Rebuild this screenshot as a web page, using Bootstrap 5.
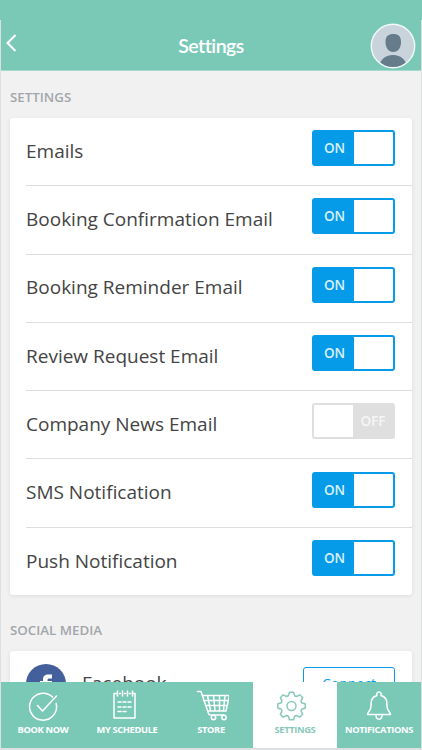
<!DOCTYPE html>
<html lang="en">
<head>
<meta charset="utf-8">
<meta name="viewport" content="width=device-width, initial-scale=1">
<title>Settings</title>
<link href="https://cdn.jsdelivr.net/npm/bootstrap@5.3.0/dist/css/bootstrap.min.css" rel="stylesheet">
<style>
:root{--teal:#7ac9b7;--blue:#069be9}
body{font-family:"Open Sans","Noto Sans",sans-serif;background:#f1f1f1;color:#444}
.app{height:750px;overflow:hidden}
.frame{border:solid #dedfe0;border-width:0 1px 2px;min-height:0}
.strip{height:20px;background:var(--teal)}
.topbar{height:51px;background:var(--teal);border-bottom:1px solid #a9d8cd;padding:0 5px 0 5px}
.side{width:46px}
.topbar h1{font:600 19.5px/1 Lato,sans-serif;letter-spacing:-.5px;padding-top:1px}
.avatar{width:46px;height:46px;margin-top:1px}
.content{min-height:0;padding:0 9px}
.heading{font-size:13.3px;font-weight:600;line-height:16px;color:#a2a6aa;padding-top:18px;height:47px}
.social-heading{height:56px;padding-top:27px}
.panel{background:#fff;border-radius:3px;box-shadow:0 1px 4px rgba(0,0,0,.09)}
.settings{height:477px;padding-left:16px}
.setting{height:68.3px;border-bottom:1px solid #dedede;padding-right:17px}
.setting:last-child{border:0}
.setting .name{font-size:19px;line-height:24px;padding-bottom:2px}
.switch{width:83px;height:36px;border:2px solid var(--blue);border-radius:3px;background:#fff;margin-top:-7px;color:#d9f1fd;font-size:13.5px;font-weight:600;line-height:32px;text-align:center}
.switch span{width:40px;background:var(--blue);padding-left:1px}
.switch.off{border-color:#dfdfdf;color:#f6f6f6}
.switch.off span{background:#dfdfdf;padding:0}
.social{height:80px;padding:13px 17px 0 16px}
.fb{width:40px;height:40px}
.social .name{font-size:19px;line-height:24px;margin:7px 0 0 16px}
.connect{width:92px;height:36px;border:1px solid var(--blue);border-radius:3px;color:var(--blue);font-size:14px;line-height:32px;margin-top:3px}
.tabs{height:66px;background:var(--teal);z-index:1}
.tab{width:84px;color:#fff;font-size:9.3px;font-weight:700;letter-spacing:-.35px;line-height:12px;padding-top:7px;text-decoration:none;white-space:nowrap}
.tab svg{width:36px;height:34px;margin-bottom:1px;fill:none;stroke:currentColor;stroke-width:1.5;stroke-linecap:round;stroke-linejoin:round}
.tab.current{background:#fff;color:#89c8b9}
</style>
</head>
<body>
<div class="app d-flex flex-column">
  <div class="strip flex-shrink-0"></div>
  <div class="frame d-flex flex-column flex-grow-1">
    <header class="topbar d-flex align-items-center justify-content-between flex-shrink-0 text-white">
      <a href="#" class="side d-flex text-white" aria-label="Back"><svg width="12" height="20" viewBox="0 0 12 20" class="mb-1" fill="none" stroke="currentColor" stroke-width="2"><path d="M9.500 2 1.500 10l8 8"/></svg></a>
      <h1 class="m-0">Settings</h1>
      <svg class="avatar" viewBox="0 0 46 46"><defs><clipPath id="face"><circle cx="23" cy="23" r="21"/></clipPath></defs><circle cx="23" cy="23" r="21.700" fill="#c8d3dc" stroke="#f2faf9" stroke-width="1.400"/><g clip-path="url(#face)" fill="#667c8b"><path d="M15.500 19c0-6 3-8 7.800-8s7.700 2 7.700 8c0 6-3 10-7.700 10s-7.800-4-7.800-10z"/><path d="M9 46c0-8 5-14 14-14s14 6 14 14z"/></g></svg>
    </header>
    <main class="content flex-grow-1 overflow-hidden">
      <h2 class="heading m-0">SETTINGS</h2>
      <section class="panel settings">
        <div class="setting d-flex align-items-center justify-content-between"><span class="name">Emails</span><div class="switch d-flex"><span>ON</span></div></div>
        <div class="setting d-flex align-items-center justify-content-between"><span class="name">Booking Confirmation Email</span><div class="switch d-flex"><span>ON</span></div></div>
        <div class="setting d-flex align-items-center justify-content-between"><span class="name">Booking Reminder Email</span><div class="switch d-flex"><span>ON</span></div></div>
        <div class="setting d-flex align-items-center justify-content-between"><span class="name">Review Request Email</span><div class="switch d-flex"><span>ON</span></div></div>
        <div class="setting d-flex align-items-center justify-content-between"><span class="name">Company News Email</span><div class="switch off d-flex justify-content-end"><span>OFF</span></div></div>
        <div class="setting d-flex align-items-center justify-content-between"><span class="name">SMS Notification</span><div class="switch d-flex"><span>ON</span></div></div>
        <div class="setting d-flex align-items-center justify-content-between"><span class="name">Push Notification</span><div class="switch d-flex"><span>ON</span></div></div>
      </section>
      <h2 class="heading social-heading m-0">SOCIAL MEDIA</h2>
      <section class="panel social d-flex align-items-start">
        <svg class="fb" viewBox="0 0 40 40"><circle cx="20" cy="20" r="20" fill="#43609c"/><path fill="#fff" d="M17 32V21h-3v-4h3v-2c0-3 2-4.500 5-4.500h4v4h-2.500c-1.500 0-2 .5-2 2V17h4.500l-.6 4h-3.900v11z"/></svg>
        <span class="name">Facebook</span>
        <span class="connect text-center ms-auto">Connect</span>
      </section>
    </main>
    <nav class="tabs d-flex flex-shrink-0 position-relative">
      <a href="#" class="tab d-flex flex-column align-items-center"><svg viewBox="-18 -17 36 34"><path d="M9.500-9A13.500 13.500 0 1 0 13.200-2.500M-5.500-.5l5 5.500L13.500-10"/></svg>BOOK NOW</a>
      <a href="#" class="tab d-flex flex-column align-items-center"><svg viewBox="-15.500 -16 36 34"><path d="M-8-11.500h-2.500V13h21v-24.500H8.500M-5-11.500h1M0-11.500h1M5-11.500h1M-7-14v5M-2-14v5M3-14v5M8-14v5M-6.500-3h3M-1.500-3h3M3.500-3h3M-6.500 2h3M-1.500 2h3M3.500 2h3M-6.500 6.500h3M-1.500 6.500h3"/></svg>MY SCHEDULE</a>
      <a href="#" class="tab d-flex flex-column align-items-center"><svg viewBox="-18.500 -17 36 34"><path d="M-14-14.500h3.500l7.500 22q.5 1.500 2 1.500h13.500M-9.500-10.500h27.500L14.500 5H-3.500M-8-5.500h25M-6-.5h21.500M-4-10.500l3 15M2-10.500l1.500 15M8-10.500L8 4.500M13.500-10.500l-1.500 15"/><circle cx="2" cy="11.500" r="2.200"/><circle cx="12.500" cy="11.500" r="2.200"/></svg>STORE</a>
      <a href="#" class="tab current d-flex flex-column align-items-center"><svg viewBox="-14.500 -17 36 34"><path d="M-3.200-10.200-2-13.800H2L3.200-10.200 4.950-9.470 8.340-11.170 11.170-8.340 9.470-4.950 10.200-3.200 13.800-2V2L10.200 3.200 9.470 4.950 11.170 8.340 8.340 11.170 4.950 9.470 3.200 10.200 2 13.800H-2L-3.200 10.200-4.950 9.470-8.340 11.170-11.170 8.340-9.470 4.950-10.200 3.200-13.800 2V-2L-10.200-3.200-9.470-4.950-11.170-8.340-8.340-11.170-4.950-9.470z"/><circle r="4.500"/></svg>SETTINGS</a>
      <a href="#" class="tab d-flex flex-column align-items-center"><svg viewBox="-18 -17 36 34"><path d="M-2-10.500a2.300 2.300 0 1 1 4 0C8-9 8-4 8 0c0 5 3.500 5.500 3.500 8.500h-23C-11.500 5.500-8 5-8 0c0-4 0-9 6-10.500zM-3 9c0 5.500 6 5.500 6 0"/></svg>NOTIFICATIONS</a>
    </nav>
  </div>
</div>
<script src="https://cdn.jsdelivr.net/npm/bootstrap@5.3.0/dist/js/bootstrap.bundle.min.js"></script>
</body>
</html>
